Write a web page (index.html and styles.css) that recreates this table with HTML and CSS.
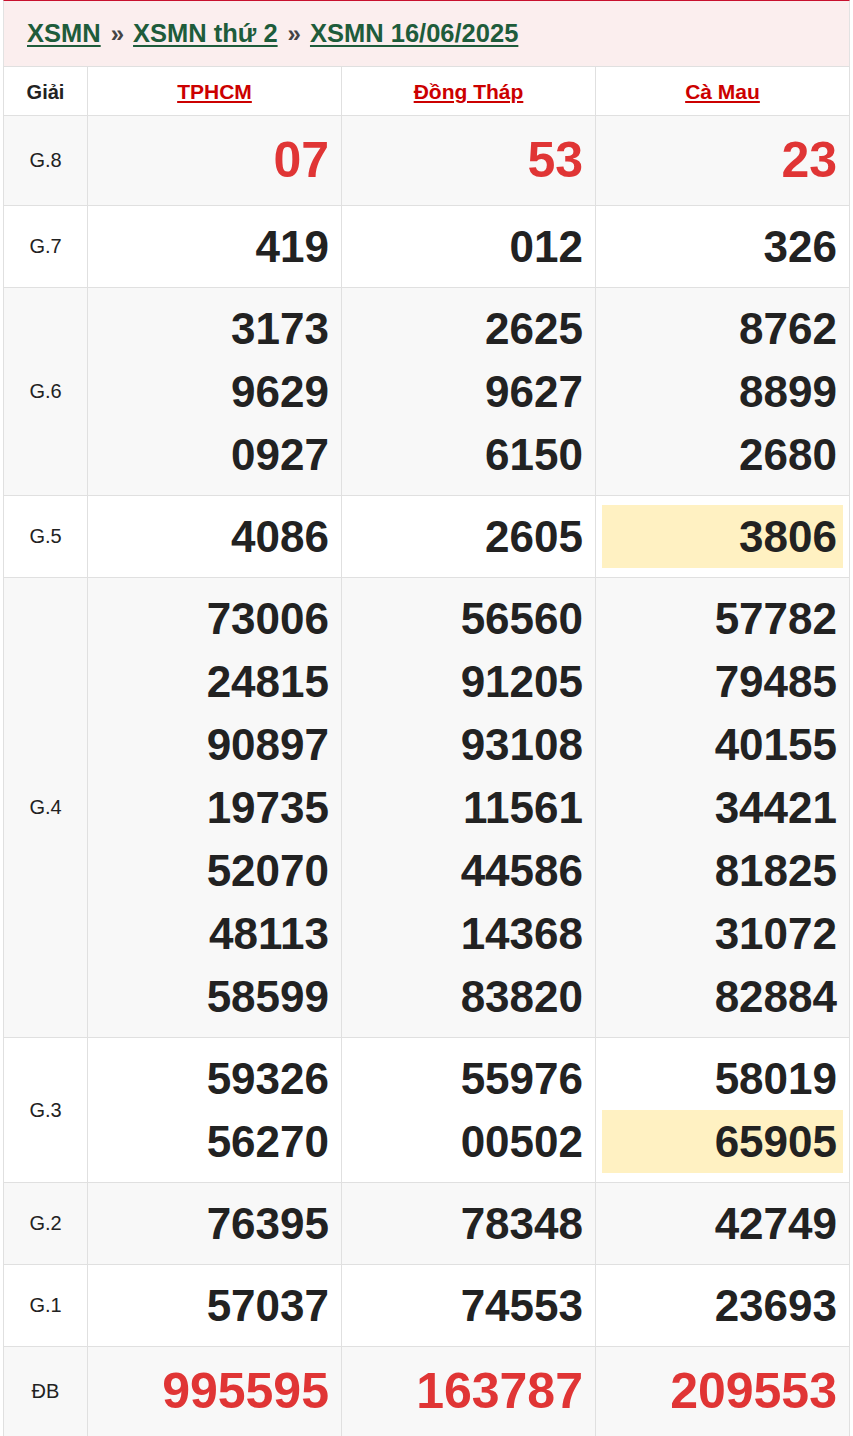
FILE: index.html
```html
<!DOCTYPE html>
<html lang="vi">
<head>
<meta charset="utf-8">
<title>XSMN 16/06/2025</title>
<link rel="stylesheet" href="styles.css">
</head>
<body>
<div class="box">
  <div class="crumbs">
    <a href="#">XSMN</a><span class="sep">»</span><a href="#">XSMN thứ 2</a><span class="sep">»</span><a href="#">XSMN 16/06/2025</a>
  </div>
  <table class="kq">
    <colgroup><col class="c-g"><col class="c-p"><col class="c-p"><col class="c-p"></colgroup>
    <thead>
      <tr><th class="lbl">Giải</th><th><a href="#">TPHCM</a></th><th><a href="#">Đồng Tháp</a></th><th><a href="#">Cà Mau</a></th></tr>
    </thead>
    <tbody>
      <tr class="alt g8"><td class="lbl">G.8</td><td><div class="n red">07</div></td><td><div class="n red">53</div></td><td><div class="n red">23</div></td></tr>
      <tr><td class="lbl">G.7</td><td><div class="n">419</div></td><td><div class="n">012</div></td><td><div class="n">326</div></td></tr>
      <tr class="alt"><td class="lbl">G.6</td>
        <td><div class="n">3173</div><div class="n">9629</div><div class="n">0927</div></td>
        <td><div class="n">2625</div><div class="n">9627</div><div class="n">6150</div></td>
        <td><div class="n">8762</div><div class="n">8899</div><div class="n">2680</div></td></tr>
      <tr><td class="lbl">G.5</td><td><div class="n">4086</div></td><td><div class="n">2605</div></td><td><div class="n hl">3806</div></td></tr>
      <tr class="alt"><td class="lbl">G.4</td>
        <td><div class="n">73006</div><div class="n">24815</div><div class="n">90897</div><div class="n">19735</div><div class="n">52070</div><div class="n">48113</div><div class="n">58599</div></td>
        <td><div class="n">56560</div><div class="n">91205</div><div class="n">93108</div><div class="n">11561</div><div class="n">44586</div><div class="n">14368</div><div class="n">83820</div></td>
        <td><div class="n">57782</div><div class="n">79485</div><div class="n">40155</div><div class="n">34421</div><div class="n">81825</div><div class="n">31072</div><div class="n">82884</div></td></tr>
      <tr><td class="lbl">G.3</td>
        <td><div class="n">59326</div><div class="n">56270</div></td>
        <td><div class="n">55976</div><div class="n">00502</div></td>
        <td><div class="n">58019</div><div class="n hl">65905</div></td></tr>
      <tr class="alt"><td class="lbl">G.2</td><td><div class="n">76395</div></td><td><div class="n">78348</div></td><td><div class="n">42749</div></td></tr>
      <tr><td class="lbl">G.1</td><td><div class="n">57037</div></td><td><div class="n">74553</div></td><td><div class="n">23693</div></td></tr>
      <tr class="alt db"><td class="lbl">ĐB</td><td><div class="n red">995595</div></td><td><div class="n red">163787</div></td><td><div class="n red">209553</div></td></tr>
    </tbody>
  </table>
</div>
</body>
</html>
```
FILE: styles.css
```css
html, body {
  margin: 0;
  padding: 0;
  background: #fff;
}
body {
  font-family: "Liberation Sans", Arial, sans-serif;
  color: #222;
}
.box {
  margin-left: 3px;
  width: 847px;
}
.crumbs {
  background: #fbeeee;
  border-top: 1px solid #c8102e;
  border-left: 1px solid #e2e2e2;
  border-right: 1px solid #e2e2e2;
  height: 66px;
  box-sizing: border-box;
  padding: 0 0 0 23px;
  display: flex;
  align-items: center;
  font-size: 25.5px;
  font-weight: bold;
}
.crumbs a {
  color: #1e5c3b;
  text-decoration: underline;
  text-underline-offset: 3px;
}
.crumbs .sep {
  color: #444;
  margin: 0 9px 0 10px;
  font-size: 24px;
}
.kq {
  width: 847px;
  border-collapse: collapse;
  table-layout: fixed;
}
.c-g { width: 84px; }
.c-p { width: 254px; }
.kq th, .kq td {
  border: 1px solid #e0e0e0;
}
.kq th {
  font-size: 21px;
  font-weight: bold;
  line-height: 30px;
  padding: 10px 0 8px;
  text-align: center;
  background: #fff;
}
.kq th a {
  color: #cc0000;
  text-decoration: underline;
}
.kq th.lbl {
  color: #222;
  font-size: 20px;
}
.kq td {
  padding: 9px 6px;
  text-align: right;
  vertical-align: top;
}
.kq td.lbl {
  text-align: center;
  vertical-align: middle;
  font-size: 20px;
  padding: 0;
  color: #222;
}
.kq tr.alt td {
  background: #f8f8f8;
}
.n {
  font-size: 44px;
  font-weight: bold;
  line-height: 63px;
  padding-right: 6px;
  color: #222;
}
.n.hl {
  background: #fff1c2;
}
.n.red {
  color: #e03535;
  font-size: 50px;
}
.g8 .n {
  line-height: 71px;
}
.db .n {
  line-height: 71px;
}
```
